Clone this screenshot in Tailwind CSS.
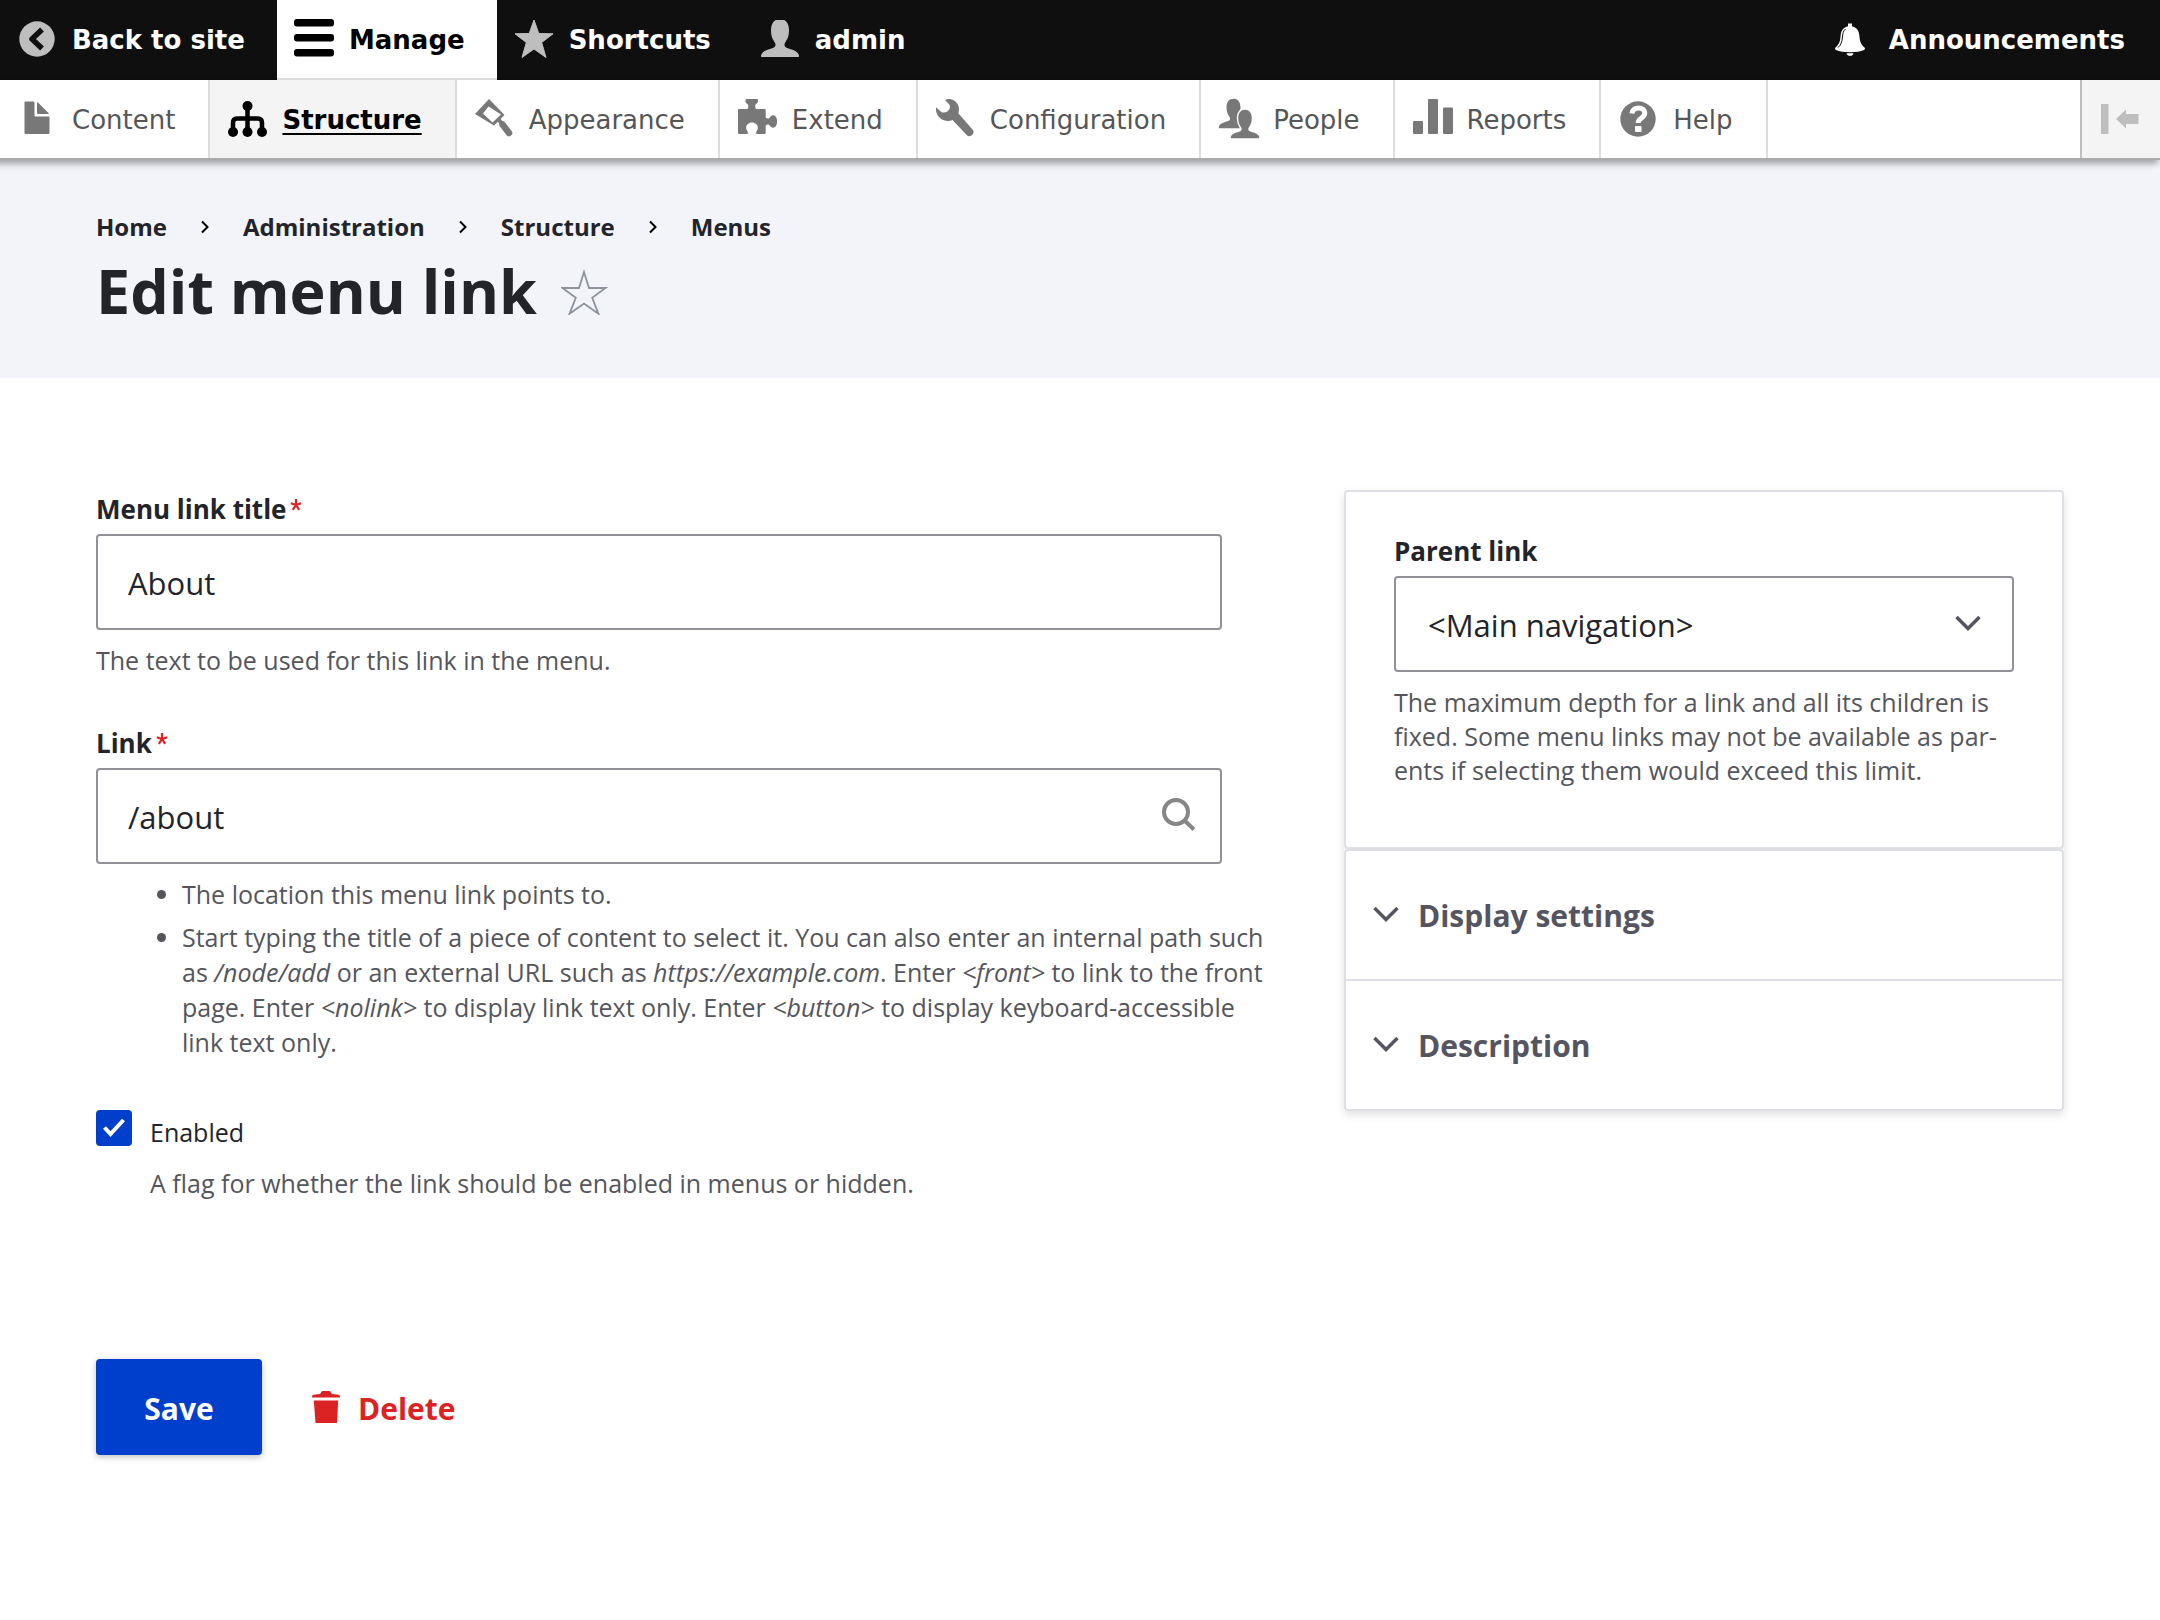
<!DOCTYPE html>
<html lang="en">
<head>
<meta charset="utf-8">
<meta name="viewport" content="width=device-width, initial-scale=1">
<title>Edit menu link</title>
<script src="https://cdn.jsdelivr.net/npm/@tailwindcss/browser@4"></script>
</head>
<body class="min-h-screen bg-white font-['Open_Sans','Noto_Sans',sans-serif] text-[#232429]">

<svg class="hidden" aria-hidden="true">
  <symbol id="person" viewBox="0 0 40 40"><path d="M20 1c5.500 0 9 4 9 11 0 6-1.500 9-3.500 12-1 1.500-1.500 3-.5 4.500 1 1.500 4 2 7.500 3.200C36.500 33 39 35.500 39 38c0 .600-.3 1-1 1H2c-.7 0-1-.4-1-1 0-2.500 2.500-5 6.500-6.300C11 30.500 14 30 15 28.500c1-1.500.5-3-.5-4.500-2-3-3.500-6-3.500-12 0-7 3.500-11 9-11z"/></symbol>
  <symbol id="chevron-down" viewBox="0 0 28 18"><path d="M2.500 3 14 14.500 25.500 3" fill="none" stroke="currentColor" stroke-width="3.500"/></symbol>
  <symbol id="chevron-right" viewBox="0 0 10 14"><path d="M2 1.500 7.500 7 2 12.500" fill="none" stroke="currentColor" stroke-width="2"/></symbol>
  <symbol id="required" viewBox="0 0 12 12"><path d="M6 0v6M.8 4.200 6 6l5.200-1.800M2.800 10.800 6 6l3.200 4.800" fill="none" stroke="currentColor" stroke-width="2.200"/></symbol>
</svg>

<!-- Toolbar -->
<header class="relative font-['DejaVu_Sans',sans-serif] text-[26px]">
  <nav aria-label="Toolbar items" class="flex h-20 bg-[#0f0f0f] font-bold text-white">
    <a href="#" class="flex items-center gap-[15px] pl-[17px] pr-8">
      <svg class="size-10" viewBox="0 0 40 40"><circle cx="20" cy="19" r="17.700" fill="#bebebe"/><path d="M25 9.500 15 19l10 9.500" fill="none" stroke="#0f0f0f" stroke-width="5.500" stroke-linejoin="round"/></svg>
      <span>Back to site</span>
    </a>
    <a href="#" class="flex items-center gap-[15px] border-b-2 border-[#ddd] bg-white pl-[17px] pr-8 text-black">
      <svg class="size-10" viewBox="0 0 40 40"><rect y="0" width="40" height="7.500" rx="3"/><rect y="15" width="40" height="7.500" rx="3"/><rect y="30" width="40" height="7.500" rx="3"/></svg>
      <span class="pt-0.5">Manage</span>
    </a>
    <a href="#" class="flex items-center gap-[15px] pl-[17px] pr-8">
      <svg class="size-10" viewBox="0 0 40 40" fill="#bebebe"><path d="M20 0l4.800 13.500 14.200.3-11.300 8.700L32 37.500l-12-8.500-12 8.500 4.300-15L1 13.800l14.200-.3z" stroke="#bebebe" stroke-linejoin="round"/></svg>
      <span>Shortcuts</span>
    </a>
    <a href="#" class="flex items-center gap-[15px] pl-[17px] pr-8">
      <svg class="size-10" viewBox="0 0 40 40" fill="#bebebe"><use href="#person" y="-2"/></svg>
      <span>admin</span>
    </a>
    <a href="#" class="ml-auto flex items-center gap-[15px] pl-[17px] pr-[35px]">
      <svg class="size-10" viewBox="4 0 40 40" fill="#fff"><path d="M18 3.500h4v2.800c4.500 1 6.800 4.200 7.300 8.700.5 6 1.200 9 5.200 12.500.8.700.5 2-.5 2.500-3.500 1.700-8 2.200-14 2.200S9.500 31.700 6 30c-1-.5-1.300-1.800-.5-2.500 4-3.500 4.700-6.500 5.200-12.500.5-4.500 2.800-7.700 7.300-8.700z"/><path d="M16.500 33.200h7c-.5 1.800-1.700 2.600-3.500 2.600s-3-.8-3.500-2.600z"/><path d="M15.500 9c-2.500 2-2.800 5-3 8-.3 4.500-1.500 8-4.500 10.500" fill="none" stroke="#0f0f0f" stroke-width="1"/></svg>
      <span>Announcements</span>
    </a>
  </nav>
  <nav aria-label="Administration menu" class="flex h-20 border-b-2 border-[#aaa] bg-white text-[#565656] shadow-[-4px_2px_6px_2px_rgba(0,0,0,0.33)]">
    <a href="#" class="flex items-center gap-[15px] border-r-2 border-[#ddd] pl-[17px] pr-[33px]">
      <svg class="size-10" viewBox="0 0 16 16" fill="#787878"><path d="M12.500 7h-5c-.3 0-.5-.2-.5-.5v-5c0-.3-.2-.5-.5-.5h-3c-.3 0-.5.2-.5.500v12c0 .3.200.5.500.5h9c.3 0 .5-.2.500-.5v-6c0-.3-.2-.5-.5-.5zM8.500 6h4c.3 0 .3-.2.100-.4L8.400 1.400c-.2-.2-.4-.1-.4.100v4c0 .3.200.5.500.5z"/></svg>
      <span class="pt-0.5">Content</span>
    </a>
    <a href="#" class="flex items-center gap-[15px] border-r-2 border-[#ddd] bg-[#f4f4f4] pl-[17px] pr-[33px] font-bold text-black">
      <svg class="size-10" viewBox="0 0 40 40"><circle cx="20.500" cy="7" r="5"/><circle cx="6" cy="33" r="5"/><circle cx="20.500" cy="33" r="5"/><circle cx="35" cy="33" r="5"/><path d="M6 32v-8c0-3 1-4.500 4-4.500h21c3 0 4 1.500 4 4.500v8M20.500 7v26" fill="none" stroke="#000" stroke-width="4.500"/></svg>
      <span class="pt-0.5 underline decoration-2 underline-offset-4">Structure</span>
    </a>
    <a href="#" class="flex items-center gap-[15px] border-r-2 border-[#ddd] pl-[17px] pr-[33px]">
      <svg class="size-10" viewBox="0 0 40 40" fill="#787878"><path fill-rule="evenodd" d="M15 0 30.500 16 20 26.500 1 15zM14.500 7.500 9 14.500 18.500 23.500l8.500-8z"/><path d="m24 20 3.500 4" stroke="#787878" stroke-width="4"/><path d="m28.500 25.500 6.500 8.500" stroke="#787878" stroke-width="6.500" stroke-linecap="round"/></svg>
      <span class="pt-0.5">Appearance</span>
    </a>
    <a href="#" class="flex items-center gap-[15px] border-r-2 border-[#ddd] pl-[17px] pr-[33px]">
      <svg class="size-10" viewBox="0 0 40 40" fill="#787878"><path d="M9 0h11.500c1.500 2.500 0 3.800-1.500 5-1 1-1.200 3.500 0 5h8.500c1 0 1.200.5 1.200 1.200v7c1.500 2.300 3.300 1.500 4.500-.2 1.500-2 4-2.500 5.800 0 1.500 2.500 1.500 6.500 0 9-1.800 2.500-4.300 2-5.800 0-1.200-1.700-3-2.500-4.500-.2v7c0 .7-.2 1.200-1.200 1.200h-8c-1.500-1.500.8-3.300 1.200-5 .8-3.500-2-6.500-5.700-6.500s-6.500 3-5.700 6.500c.4 1.700 2.700 3.500 1.200 5H2c-.7 0-1-.5-1-1.200V11.200C1 10.500 1.300 10 2 10h8.500c1.200-1.500 1-4 0-5C9 3.800 7.500 2.500 9 0z"/></svg>
      <span class="pt-0.5">Extend</span>
    </a>
    <a href="#" class="flex items-center gap-[15px] border-r-2 border-[#ddd] pl-[17px] pr-[33px]">
      <svg class="size-10" viewBox="0 0 40 40" fill="#787878"><path d="M10 1c2-1 4-1.200 6-.7 5 1.200 8 5.700 8 9.700 0 2-.5 3-.5 4.500l14.200 16.200c1 1.300 1.100 2.800.2 4.300-1.400 2.300-4.400 3.100-6.200 1L17.500 21c-2 .8-4 1.300-6.500.8C5 20.600.3 15.500 1 8.200l5.500 5c3.500.8 5.500-.3 7-2 1.700-2 1.800-4 1-5.500z"/></svg>
      <span class="pt-0.5">Configuration</span>
    </a>
    <a href="#" class="flex items-center gap-[15px] border-r-2 border-[#ddd] pl-[17px] pr-[33px]">
      <svg class="size-10 overflow-visible" viewBox="0 0 40 40" fill="#787878"><use href="#person" x="0" y="-1" width="31" height="31"/><use href="#person" x="12" y="10" width="30" height="30" stroke="#fff" stroke-width="4"/><use href="#person" x="12" y="10" width="30" height="30"/></svg>
      <span class="pt-0.5">People</span>
    </a>
    <a href="#" class="flex items-center gap-[15px] border-r-2 border-[#ddd] pl-[17px] pr-[33px]">
      <svg class="size-10 overflow-visible" viewBox="0 0 40 40" fill="#787878"><rect x="1" y="22" width="10" height="13" rx="1"/><rect x="16" y="0" width="10" height="35" rx="1"/><rect x="31" y="8.500" width="10" height="26.500" rx="1"/></svg>
      <span class="pt-0.5">Reports</span>
    </a>
    <a href="#" class="flex items-center gap-[15px] border-r-2 border-[#ddd] pl-[17px] pr-[33px]">
      <svg class="size-10" viewBox="0 0 40 40"><circle cx="20" cy="20" r="17.700" fill="#787878"/><path d="M14 14.500c.5-3.500 3-5.500 6.500-5.500 3.800 0 6.300 2.200 6.300 5.300 0 4.700-6.600 5.200-6.600 9.200v.5" fill="none" stroke="#fff" stroke-width="5"/><rect x="17" y="27" width="6.500" height="6" rx="1" fill="#fff"/></svg>
      <span class="pt-0.5">Help</span>
    </a>
    <button type="button" aria-label="Vertical orientation" class="ml-auto flex items-center border-l-2 border-[#bebebe] bg-[#f4f4f4] px-[19px]">
      <svg class="size-10" viewBox="0 0 40 40" fill="#bebebe"><rect x="0" y="5" width="7.500" height="30"/><path d="M15 20 25 10.500V15h12.500v10H25v4.500z"/></svg>
    </button>
  </nav>
</header>

<!-- Page header -->
<div class="bg-[#f3f4f9] px-24 pt-[49px] pb-[51px]">
  <nav aria-label="Breadcrumb">
    <ol class="flex items-center gap-[33px] text-2xl leading-9 font-bold">
      <li><a href="#">Home</a></li>
      <li aria-hidden="true"><svg class="h-3.5 w-2.5 text-black"><use href="#chevron-right"/></svg></li>
      <li><a href="#">Administration</a></li>
      <li aria-hidden="true"><svg class="h-3.5 w-2.5 text-black"><use href="#chevron-right"/></svg></li>
      <li><a href="#">Structure</a></li>
      <li aria-hidden="true"><svg class="h-3.5 w-2.5 text-black"><use href="#chevron-right"/></svg></li>
      <li><a href="#">Menus</a></li>
    </ol>
  </nav>
  <div class="mt-2.5 flex items-center gap-6">
    <h1 class="text-[61px] leading-[72px] font-bold">Edit menu link</h1>
    <a href="#" aria-label="Add to shortcuts">
      <svg class="size-12" viewBox="0 0 48 48" fill="none" stroke="#8e929c" stroke-width="1.800"><path d="M23 5l5 16h16.500L31.200 30.800l6.300 16L23 36.500 8.500 46.800l6.300-16L1.500 21H18z"/></svg>
    </a>
  </div>
</div>

<!-- Form -->
<form class="grid grid-cols-[33fr_20fr] items-start gap-[60px] px-24 pt-28 pb-28">
  <div class="pt-[3px]">
    <div class="flex flex-col gap-[50px]">
      <div>
        <label for="title" class="mb-[9px] flex gap-1 text-[26px] leading-8 font-bold">Menu link title <svg class="mt-1.5 size-3 text-[#dc2323]" aria-label="required"><use href="#required"/></svg></label>
        <input id="title" type="text" value="About" class="block h-24 w-[1126px] max-w-full rounded-sm border-2 border-[#919297] bg-white px-[30px] pt-0.5 text-[31px]">
        <p class="mt-[13px] text-[25px] leading-[34px] text-[#55565b]">The text to be used for this link in the menu.</p>
      </div>
      <div>
        <label for="link" class="mb-[9px] flex gap-1 text-[26px] leading-8 font-bold">Link <svg class="mt-1.5 size-3 text-[#dc2323]" aria-label="required"><use href="#required"/></svg></label>
        <div class="relative w-[1126px] max-w-full">
          <input id="link" type="text" value="/about" class="block h-24 w-full rounded-sm border-2 border-[#919297] bg-white pr-20 pl-[30px] pt-0.5 text-[31px]">
          <svg class="pointer-events-none absolute top-7 right-6 size-9" viewBox="0 0 36 36" fill="none" stroke="#868686" stroke-width="4"><circle cx="14" cy="16" r="12"/><path d="m22.500 24.500 9.500 9"/></svg>
        </div>
        <ul class="mt-[13px] list-disc space-y-2 pr-3 pl-[86px] text-[25px] leading-[35px] text-[#55565b]">
          <li>The location this menu link points to.</li>
          <li>Start typing the title of a piece of content to select it. You can also enter an internal path such as <em>/node/add</em> or an external URL such as <em>https://example.com</em>. Enter <em>&lt;front&gt;</em> to link to the front page. Enter <em>&lt;nolink&gt;</em> to display link text only. Enter <em>&lt;button&gt;</em> to display keyboard-accessible link text only.</li>
        </ul>
      </div>
      <div>
        <div class="flex items-start gap-[18px]">
          <div class="relative size-9">
            <input id="enabled" type="checkbox" checked class="block size-9 appearance-none rounded-sm bg-[#003ecc]">
            <svg class="pointer-events-none absolute inset-0 size-9" viewBox="0 0 36 36" fill="none" stroke="#fff" stroke-width="4"><path d="m8.500 17.500 6 6.500 13-14"/></svg>
          </div>
          <label for="enabled" class="text-[25px] leading-11">Enabled</label>
        </div>
        <p class="mt-3 pl-[54px] text-[25px] leading-[34px] text-[#55565b]">A flag for whether the link should be enabled in menus or hidden.</p>
      </div>
    </div>
    <div class="mt-[159px] flex items-center gap-[50px] text-[30px] font-bold">
      <button type="submit" class="h-24 min-w-[166px] rounded-sm bg-[#003ecc] px-8 pt-0.5 text-white shadow-[0_2px_6px_rgba(0,0,0,0.25)]">Save</button>
      <a href="#" class="flex items-center gap-[18px] text-[#dc2323]">
        <svg class="h-8 w-7" viewBox="0 0 28 32" fill="currentColor"><path d="M9 1.500C9.500.5 10 0 11 0h6c1 0 1.500.5 2 1.500L20 3l6.500.8c1 .2 1.500 1 1.500 2.700H0c0-1.700.5-2.500 1.500-2.700L8 3zM1.800 9.500h24.400L25 32H3.500z"/></svg>
        <span class="pt-0.5">Delete</span>
      </a>
    </div>
  </div>

  <aside class="rounded-sm shadow-[0_4px_10px_rgba(0,0,0,0.12)]">
    <section class="rounded-sm border-2 border-[#dedfe4] bg-white px-12 pt-[43px] pb-[60px]">
      <label for="parent" class="mb-[9px] block text-[26px] leading-8 font-bold">Parent link</label>
      <div class="relative">
        <select id="parent" class="block h-24 w-full appearance-none rounded-sm border-2 border-[#919297] bg-white px-8 pt-0.5 text-[31px]">
          <option>&lt;Main navigation&gt;</option>
        </select>
        <svg class="pointer-events-none absolute top-[38px] right-8 h-[18px] w-7 text-[#545560]"><use href="#chevron-down"/></svg>
      </div>
      <p class="mt-[13px] text-[25px] leading-[34px] text-[#55565b]">The maximum depth for a link and all its children is fixed. Some menu links may not be available as par&shy;ents if selecting them would exceed this limit.</p>
    </section>
    <section class="divide-y-2 divide-[#dedfe4] rounded-sm border-2 border-[#dedfe4] bg-white text-[30px] leading-[40px] font-bold text-[#545560]">
      <details>
        <summary class="flex h-32 items-center gap-[18px] pt-0.5 pl-[26px]"><svg class="mb-1 h-[18px] w-7"><use href="#chevron-down"/></svg>Display settings</summary>
      </details>
      <details>
        <summary class="flex h-32 items-center gap-[18px] pt-0.5 pl-[26px]"><svg class="mb-1 h-[18px] w-7"><use href="#chevron-down"/></svg>Description</summary>
      </details>
    </section>
  </aside>
</form>
</body>
</html>
